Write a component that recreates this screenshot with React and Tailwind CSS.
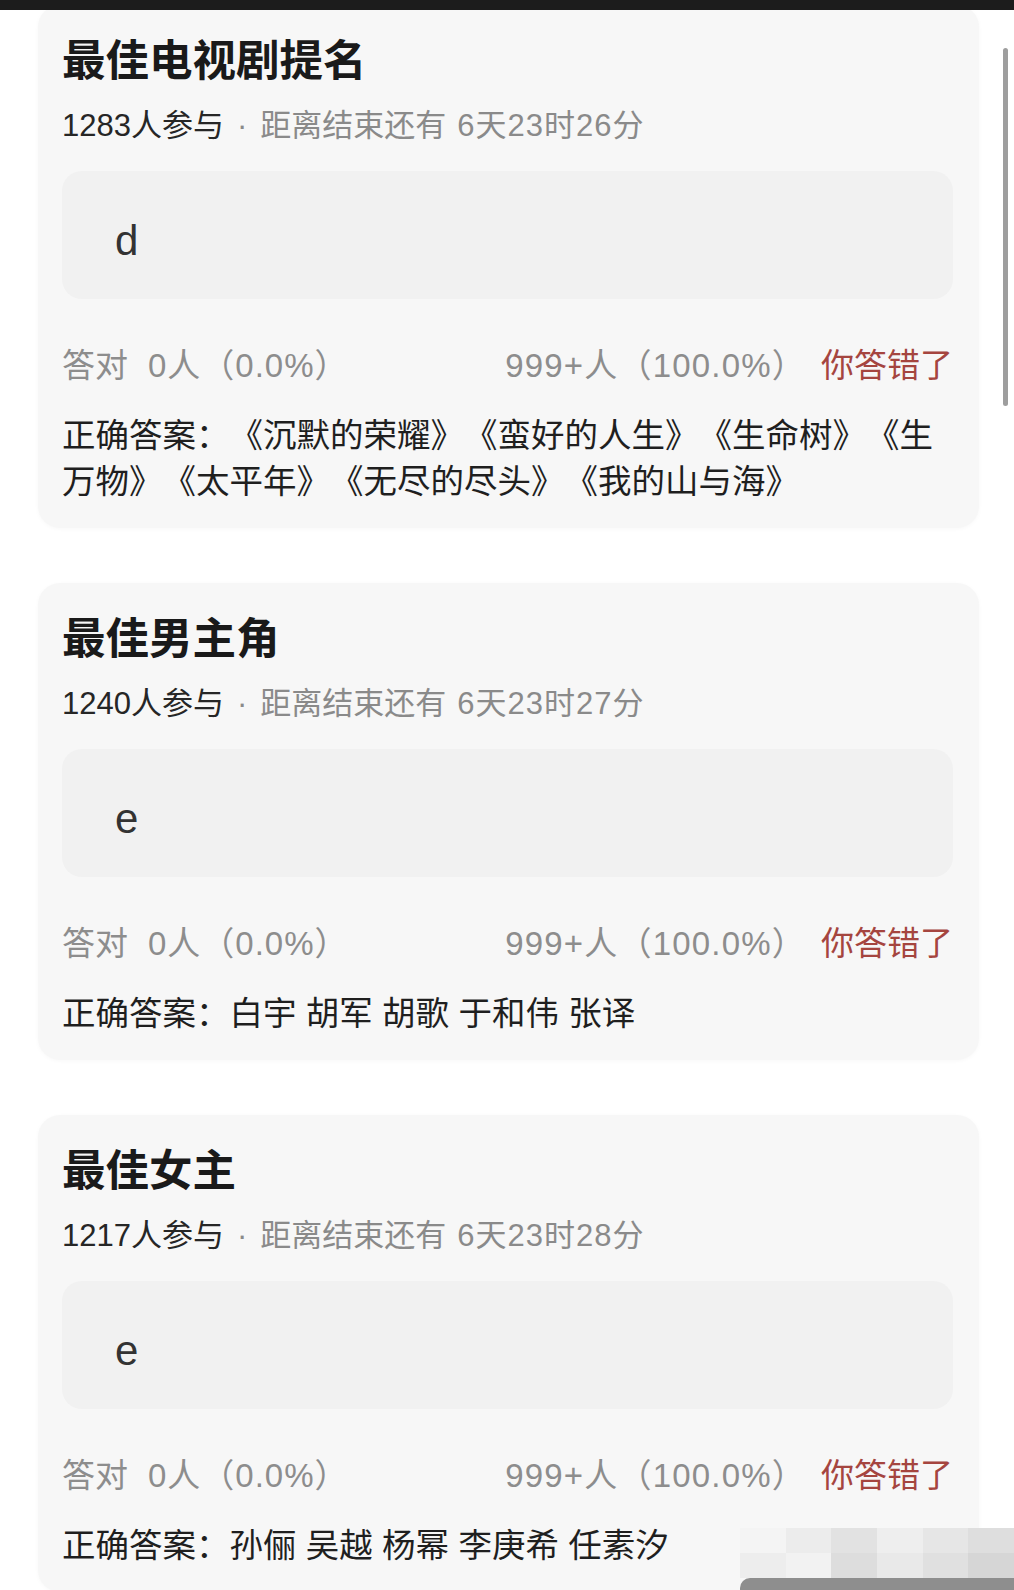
import React from "react";

const cards = [
  {
    title: "最佳电视剧提名",
    count: "1283人参与",
    time: "6天23时26分",
    pick: "d",
    answer: "正确答案：《沉默的荣耀》《蛮好的人生》《生命树》《生万物》《太平年》《无尽的尽头》《我的山与海》",
  },
  {
    title: "最佳男主角",
    count: "1240人参与",
    time: "6天23时27分",
    pick: "e",
    answer: "正确答案：白宇 胡军 胡歌 于和伟 张译",
  },
  {
    title: "最佳女主",
    count: "1217人参与",
    time: "6天23时28分",
    pick: "e",
    answer: "正确答案：孙俪 吴越 杨幂 李庚希 任素汐",
  },
];

const font = { fontFamily: '"Liberation Sans", "Noto Sans CJK SC", sans-serif' };

function Card({ c, first }) {
  return (
    <div
      className={`ml-[38px] w-[941px] rounded-[22px] bg-[#f7f7f7] pl-[24px] pr-[26px] pt-[30px] pb-[23px] shadow-[0_1px_4px_rgba(0,0,0,0.03)] ${
        first ? "-mt-[5px]" : "mt-[55px]"
      }`}
    >
      <div className="text-[43.5px] leading-[52px] font-bold text-[#1a1a1a]">{c.title}</div>
      <div className="mt-[21px] text-[31px] leading-[36px] whitespace-nowrap flex items-center">
        <span className="text-[#262626]">{c.count}</span>
        <span className="mx-[13px] text-[#8a8a8a]">·</span>
        <span className="text-[#8a8a8a]">距离结束还有</span>
        <span className="ml-[11px] text-[#8a8a8a] tracking-[1px]">{c.time}</span>
      </div>
      <div className="mt-[27px] h-[128px] rounded-[20px] bg-[#f1f1f1] pl-[53px] pt-[10px] flex items-center">
        <span className="text-[42px] text-[#333]">{c.pick}</span>
      </div>
      <div className="mt-[47px] flex items-center justify-between text-[33px] leading-[40px] whitespace-nowrap">
        <div className="text-[#8d8d8d]">
          <span>答对</span>
          <span className="ml-[20px] tracking-[1px]">0人（0.0%）</span>
        </div>
        <div className="flex items-center">
          <span className="text-[#8d8d8d] tracking-[1.2px]">999+人（100.0%）</span>
          <span className="ml-[15px] text-[#a5453f]">你答错了</span>
        </div>
      </div>
      <div className="mt-[27px] text-[33.5px] leading-[46px] text-[#1f1f1f]">{c.answer}</div>
    </div>
  );
}

export default function App() {
  return (
    <div
      className="relative min-h-[1590px] w-[1014px] overflow-hidden bg-white [text-spacing-trim:space-all]"
      style={font}
    >
      <div className="relative z-10 h-[10px] w-full bg-[#1c1c1c]" />
      {cards.map((c, i) => (
        <Card key={i} c={c} first={i === 0} />
      ))}
      <div className="absolute left-[1003px] top-[48px] h-[358px] w-[5px] rounded-full bg-[#9e9e9e]" />
      <div className="absolute left-[740px] top-[1528px] grid grid-cols-6 w-[274px]">
        <div className="h-[25px] bg-[#f4f4f4]" />
        <div className="h-[25px] bg-[#ececec]" />
        <div className="h-[25px] bg-[#e2e2e2]" />
        <div className="h-[25px] bg-[#eeeeee]" />
        <div className="h-[25px] bg-[#e6e6e6]" />
        <div className="h-[25px] bg-[#dedede]" />
        <div className="h-[25px] bg-[#ededed]" />
        <div className="h-[25px] bg-[#f2f2f2]" />
        <div className="h-[25px] bg-[#dddddd]" />
        <div className="h-[25px] bg-[#e9e9e9]" />
        <div className="h-[25px] bg-[#e0e0e0]" />
        <div className="h-[25px] bg-[#d6d6d6]" />
      </div>
      <div className="absolute left-[740px] top-[1578px] h-[12px] w-[274px] rounded-tl-[10px] bg-[#8e8e8e]" />
    </div>
  );
}
